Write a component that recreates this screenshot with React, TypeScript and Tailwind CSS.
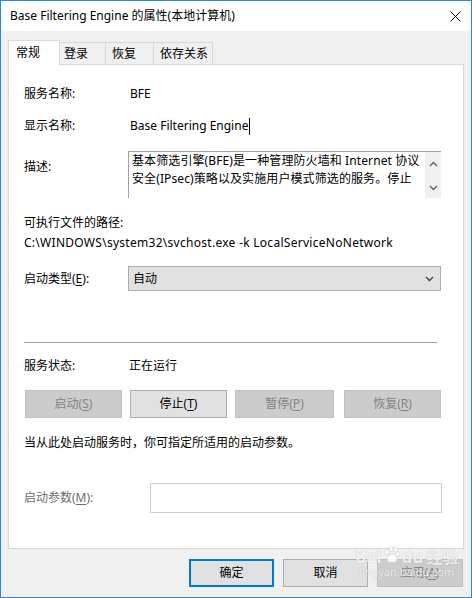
import React from "react";

const FONT = { fontFamily: '"Noto Sans", "Noto Sans CJK SC", sans-serif' };

function U({ children }: { children: React.ReactNode }) {
  return <span className="underline underline-offset-[2px] decoration-1">{children}</span>;
}

function Chevron({ up = false, className = "" }: { up?: boolean; className?: string }) {
  return (
    <svg width="9" height="6" viewBox="0 0 9 6" className={className}>
      <path
        d={up ? "M1 5 L4.5 1.5 L8 5" : "M1 1 L4.5 4.5 L8 1"}
        fill="none"
        stroke="currentColor"
        strokeWidth="1.4"
      />
    </svg>
  );
}

export default function App() {
  return (
    <div
      className="w-[472px] h-[598px] border border-[#2b87e3] bg-[#f0f0f0] flex flex-col text-[12px] text-black relative overflow-hidden"
      style={FONT}
    >
      {/* title bar */}
      <div className="h-[30px] bg-white flex items-center justify-between pl-[9px] pr-[9px] shrink-0">
        <span className="leading-[16px]">Base Filtering Engine 的属性(本地计算机)</span>
        <svg width="11" height="11" viewBox="0 0 11 11" className="mr-[1px]">
          <path d="M0.5 0.5 L10.5 10.5 M10.5 0.5 L0.5 10.5" stroke="#000" strokeWidth="1" />
        </svg>
      </div>

      <div className="flex-1 flex flex-col px-[7px]">
        {/* tabs */}
        <div className="mt-[9px] flex items-end h-[24px]">
          <div className="relative z-10 w-[52px] h-[25px] -mb-px bg-white border-t border-l border-r border-[#d9d9d9] pl-[7px] pt-[3px] leading-[18px]">
            常规
          </div>
          <div className="w-[46px] h-[22px] border-t border-r border-[#d9d9d9] pl-[4px] pt-[2px] leading-[18px]">
            登录
          </div>
          <div className="w-[48px] h-[22px] border-t border-r border-[#d9d9d9] pl-[6px] pt-[2px] leading-[18px]">
            恢复
          </div>
          <div className="w-[59px] h-[22px] border-t border-r border-[#d9d9d9] pl-[6px] pt-[2px] leading-[18px]">
            依存关系
          </div>
        </div>

        {/* panel */}
        <div className="h-[485px] bg-white border border-[#d9d9d9] flex flex-col pl-[15px] leading-[18px]">
          <div className="mt-[20px] flex h-[18px]">
            <div className="w-[106px]">服务名称:</div>
            <div>BFE</div>
          </div>
          <div className="mt-[14px] flex h-[18px]">
            <div className="w-[106px]">显示名称:</div>
            <div className="flex items-center">
              <span>Base Filtering Engine</span>
              <span className="inline-block w-px h-[17px] bg-black ml-[1px]" />
            </div>
          </div>
          <div className="mt-[16px] flex">
            <div className="w-[104px] pt-[7px]">描述:</div>
            <div className="w-[313px] h-[47px] border-t border-l border-[#a0a0a0] flex">
              <div className="flex-1 pl-[3px] text-[12px] leading-[18px] overflow-hidden whitespace-nowrap tracking-[0.1px]">
                <div>基本筛选引擎(BFE)是一种管理防火墙和 Internet 协议</div>
                <div>安全(IPsec)策略以及实施用户模式筛选的服务。停止</div>
              </div>
              <div className="w-[16px] bg-[#f0f0f0] flex flex-col items-center justify-between pt-[9px] pb-[7px] text-[#606060]">
                <Chevron up />
                <Chevron />
              </div>
            </div>
          </div>
          <div className="mt-[16px] h-[18px]">可执行文件的路径:</div>
          <div className="mt-[2px] h-[18px] whitespace-nowrap tracking-[0.28px]">
            C:\WINDOWS\system32\svchost.exe -k LocalServiceNoNetwork
          </div>
          <div className="mt-[14px] flex items-center">
            <div className="w-[104px] pt-[1px]">
              启动类型(<U>E</U>):
            </div>
            <div className="w-[313px] h-[25px] bg-[#e1e1e1] border border-[#adadad] flex items-center justify-between pl-[4px] pr-[6px]">
              <span>自动</span>
              <Chevron className="text-[#404040]" />
            </div>
          </div>
          <div className="mt-[51px] h-px w-[413px] bg-[#a0a0a0]" />
          <div className="mt-[14px] flex h-[18px]">
            <div className="w-[105px]">服务状态:</div>
            <div>正在运行</div>
          </div>
          <div className="mt-[15px] flex h-[28px] ml-[1px]">
            <div className="w-[97px] h-[28px] bg-[#cccccc] border border-[#bfbfbf] text-[#838383] flex items-center justify-center">
              启动(<U>S</U>)
            </div>
            <div className="ml-[8px] w-[97px] h-[28px] bg-[#e1e1e1] border border-[#adadad] flex items-center justify-center">
              停止(<U>T</U>)
            </div>
            <div className="ml-[8px] w-[99px] h-[28px] bg-[#cccccc] border border-[#bfbfbf] text-[#838383] flex items-center justify-center">
              暂停(<U>P</U>)
            </div>
            <div className="ml-[10px] w-[97px] h-[28px] bg-[#cccccc] border border-[#bfbfbf] text-[#838383] flex items-center justify-center">
              恢复(<U>R</U>)
            </div>
          </div>
          <div className="mt-[16px] h-[18px]">当从此处启动服务时，你可指定所适用的启动参数。</div>
          <div className="mt-[31px] flex items-center">
            <div className="w-[126px] text-[#6d6d6d]">
              启动参数(<U>M</U>):
            </div>
            <div className="w-[292px] h-[30px] border border-[#cccccc]" />
          </div>
        </div>

        {/* bottom buttons */}
        <div className="mt-[10px] flex justify-end pr-[1px]">
          <div className="w-[85px] h-[28px] bg-[#e1e1e1] border-2 border-[#0078d7] flex items-center justify-center">
            确定
          </div>
          <div className="ml-[9px] w-[85px] h-[28px] bg-[#e1e1e1] border border-[#adadad] flex items-center justify-center">
            取消
          </div>
          <div className="ml-[9px] w-[86px] h-[28px] bg-[#cccccc] border border-[#bfbfbf] text-[#838383] flex items-center justify-center">
            应用(<U>A</U>)
          </div>
        </div>
      </div>

      {/* watermark */}
      <div className="absolute left-[354px] top-[545px] flex flex-col items-start pointer-events-none select-none">
        <div className="flex items-end text-white/80 leading-none" style={{ textShadow: "0 0 1px rgba(120,120,120,0.5)" }}>
          <span className="text-[17px] font-bold">Bai</span>
          <svg width="18" height="18" viewBox="0 0 18 18" className="mx-[1px] mb-[1px]">
            <g fill="rgba(255,255,255,0.85)" stroke="rgba(150,150,150,0.5)" strokeWidth="0.5">
              <ellipse cx="4" cy="6" rx="2" ry="2.6" />
              <ellipse cx="8" cy="3" rx="2" ry="2.5" />
              <ellipse cx="12.5" cy="3.5" rx="2" ry="2.5" />
              <ellipse cx="15" cy="8" rx="1.8" ry="2.3" />
              <path d="M4 15 C4 10 7 8 9.5 8 C12 8 15 11 14 15 C13 17 6 17 4 15 Z" />
            </g>
          </svg>
          <span className="text-[17px] font-bold">du</span>
          <span className="text-[16px] font-bold ml-[3px]">经验</span>
        </div>
        <div className="text-[11px] text-white/80 leading-[14px] ml-[4px]" style={{ textShadow: "0 0 1px rgba(120,120,120,0.5)" }}>
          jingyan.baidu.com
        </div>
      </div>
    </div>
  );
}
